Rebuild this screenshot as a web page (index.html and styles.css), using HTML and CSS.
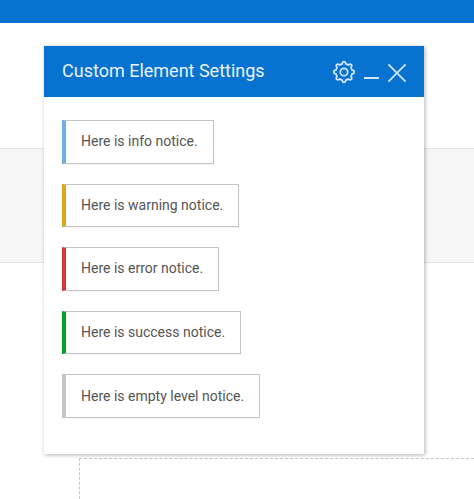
FILE: index.html
```html
<!DOCTYPE html>
<html lang="en">
<head>
<meta charset="utf-8">
<meta name="viewport" content="width=device-width, initial-scale=1">
<title>Custom Element Settings</title>
<link rel="stylesheet" href="styles.css">
</head>
<body>
<div class="page">
  <header class="topbar"></header>
  <div class="band"></div>
  <main class="dropzone"></main>
</div>
<section class="panel" role="dialog" aria-labelledby="panel-title">
  <header class="panel-header">
    <h1 class="panel-title" id="panel-title">Custom Element Settings</h1>
    <div class="controls">
      <button class="control" type="button" aria-label="Settings">
        <svg viewBox="0 0 24 24" width="24" height="24"><path d="M10.2 3.9Q10.4 1.7 12 1.7T13.8 3.9Q15.1 4.2 16.4 5Q18.2 3.6 19.3 4.7T19 7.6Q19.8 8.9 20.1 10.2Q22.3 10.4 22.3 12T20.1 13.8Q19.8 15.1 19 16.4Q20.4 18.2 19.3 19.3T16.4 19Q15.1 19.8 13.8 20.1Q13.6 22.3 12 22.3T10.2 20.1Q8.9 19.8 7.6 19Q5.8 20.4 4.7 19.3T5 16.4Q4.2 15.1 3.9 13.8Q1.7 13.6 1.7 12T3.9 10.2Q4.2 8.9 5 7.6Q3.6 5.8 4.7 4.7T7.6 5Q8.9 4.2 10.2 3.9Z"/><circle cx="12" cy="12" r="3.7"/></svg>
      </button>
      <button class="control" type="button" aria-label="Minimize">
        <svg viewBox="0 0 15 24" width="15" height="24"><path d="M0 18H15" stroke-width="2"/></svg>
      </button>
      <button class="control" type="button" aria-label="Close">
        <svg viewBox="0 0 20 24" width="20" height="24"><path d="M1.4 4.4L18.6 21.6M18.6 4.4L1.4 21.6"/></svg>
      </button>
    </div>
  </header>
  <div class="notices">
    <p class="notice info">Here is info notice.</p>
    <p class="notice warning">Here is warning notice.</p>
    <p class="notice error">Here is error notice.</p>
    <p class="notice success">Here is success notice.</p>
    <p class="notice">Here is empty level notice.</p>
  </div>
</section>
</body>
</html>
```
FILE: styles.css
```css
* {
  box-sizing: border-box;
}

body {
  margin: 0;
  background: #fff;
  color: #555;
  font: 14px/20px Roboto, "Liberation Sans", sans-serif;
}

.page {
  display: flex;
  flex-direction: column;
  min-height: 100vh;
  overflow: hidden;
}

.topbar {
  height: 23px;
  background: #0772d0;
}

.band {
  height: 115px;
  margin-top: 125px;
  background: #f6f6f6;
  border: solid #e5e5e5;
  border-width: 1px 0;
}

.dropzone {
  flex: 1;
  margin: 195px 0 0 79px;
  border: dashed #c8c8c8;
  border-width: 1px 0 0 1px;
}

.panel {
  position: absolute;
  top: 46px;
  left: 44px;
  right: 50px;
  background: #fff;
  box-shadow: 1px 1px 4px rgba(0, 0, 0, 0.3);
}

.panel-header {
  display: flex;
  align-items: center;
  justify-content: space-between;
  height: 51px;
  padding: 0 17px 2px 18px;
  background: #0772d0;
  color: #eaf3fb;
}

.panel-title {
  margin: 0;
  font-size: 18px;
  font-weight: 400;
  line-height: 24px;
}

.controls {
  display: flex;
  gap: 8px;
  padding-top: 2px;
}

.control {
  display: flex;
  padding: 0;
  border: 0;
  background: none;
  color: #d2e6f8;
  cursor: pointer;
}

.control svg {
  fill: none;
  stroke: currentColor;
  stroke-width: 1.7;
}

.notices {
  display: grid;
  grid-auto-rows: 1fr;
  justify-items: start;
  gap: 20px;
  min-height: 357px;
  padding: 23px 18px 36px;
}

.notice {
  display: flex;
  align-items: center;
  margin: 0;
  padding: 0 15px 1px;
  border: 1px solid #c3c4c7;
  border-left-width: 4px;
  box-shadow: 0 1px 1px rgba(0, 0, 0, 0.04);
}

.info {
  border-left-color: #72aee6;
}

.warning {
  border-left-color: #dba617;
}

.error {
  border-left-color: #d63638;
}

.success {
  border-left-color: #00a32a;
}
```
